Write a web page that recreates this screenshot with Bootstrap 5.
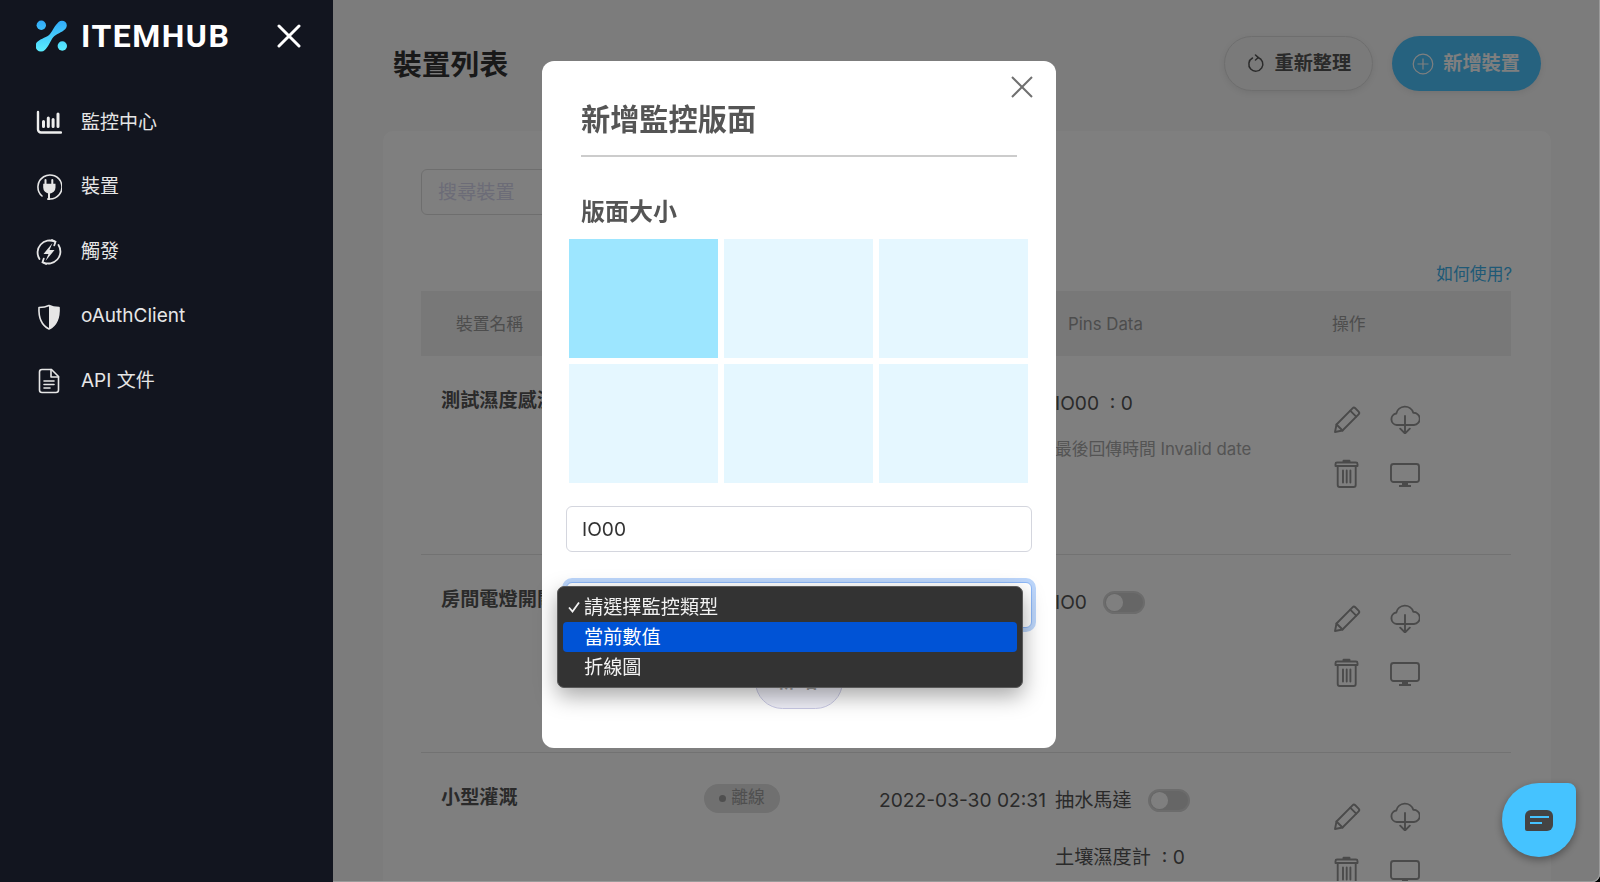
<!DOCTYPE html>
<html lang="zh-Hant">
<head>
    <meta charset="UTF-8">
    <meta name="viewport" content="width=device-width, initial-scale=1.0">
    <title>ITEMHUB</title>
    <link href="https://cdn.jsdelivr.net/npm/bootstrap@5.3.0/dist/css/bootstrap.min.css" rel="stylesheet">
    <style>
        html, body {
            height: 100%;
            overflow: hidden;
        }

        body {
            font-family: Inter, "Noto Sans CJK TC", sans-serif;
            font-size: 19.2px;
            color: #555;
            background-color: #000;
        }

        .app-shell {
            height: 882px;
        }

        /* sidebar stays above the backdrop */
        .side-bar {
            width: 333px;
            flex: none;
            background-color: #12151f;
            color: #e6e6e6;
            position: relative;
            z-index: 1060;
        }

        .side-top {
            height: 72px;
            padding: 0 36px;
        }

        .brand-name {
            font-family: Roboto, Inter, sans-serif;
            font-size: 32px;
            font-weight: 700;
            letter-spacing: 1.5px;
            color: #fff;
            line-height: 1;
            margin-left: 13px;
        }

        .side-close {
            margin-left: auto;
            margin-right: -4px;
        }

        .side-menu {
            padding-top: 18.5px;
        }

        .side-menu a {
            height: 64.6px;
            padding-left: 36px;
            gap: 19px;
            font-size: 19px;
            color: #e6e6e6;
            text-decoration: none;
        }

        .side-menu svg {
            width: 26px;
            height: 26px;
            flex: none;
        }

        .main-area {
            flex: 1;
            min-width: 0;
            background-color: #f8f8f8;
            border-bottom-right-radius: 8px;
            padding: 36px 49px 0 50px;
            overflow: hidden;
        }

        .page-head {
            padding: 0 10px;
        }

        .page-title {
            font-size: 28.8px;
            font-weight: 700;
            color: #333;
            margin: 4px 0 0;
        }

        .head-btn {
            height: 55px;
            padding: 0 21px;
            border-radius: 28px;
            font-size: 19.2px;
            font-weight: 700;
            gap: 9px;
            box-shadow: 0 2px 6px rgba(0, 0, 0, .08);
        }

        .btn-refresh {
            background-color: #f4f4f4;
            border: 1px solid #ddd;
            color: #555;
        }

        .btn-add {
            background-color: #4cc4ff;
            border: 0;
            color: #fff;
            margin-left: 19px;
            padding-left: 20px;
        }

        .list-panel {
            margin-top: 40px;
            background-color: #fff;
            border: 0;
            border-radius: 10px;
            padding: 38px 39px 0 38px;
        }

        .search-box {
            width: 300px;
            height: 46px;
            font-size: 19.2px;
            border-color: #ddd;
            padding-left: 16px;
        }

        .search-box::placeholder {
            color: #d8d8ef;
        }

        .howto-row {
            margin-top: 47px;
            height: 29px;
            font-size: 16.8px;
        }

        .howto-row a {
            color: #3fb2ec;
            text-decoration: none;
        }

        .device-table {
            table-layout: fixed;
            width: 1090px;
            margin: 0;
        }

        .device-table th {
            height: 65px;
            background-color: #f0f0f0;
            font-size: 16.8px;
            font-weight: 400;
            color: #9a9a9a;
            padding: 2px 0 0 35px;
            vertical-align: middle;
            border: 0;
        }

        .device-table td {
            height: 198px;
            vertical-align: top;
            padding: 0;
            font-size: 19.2px;
            color: #555;
            border-bottom: 1px solid #e4e4e4;
            background: transparent;
        }

        .device-table th.pins-head {
            padding-left: 21px;
        }

        .device-name {
            padding: 30px 0 0 20px !important;
            font-weight: 700;
            white-space: nowrap;
        }

        .status-cell {
            padding: 28px 0 0 20px !important;
        }

        .date-cell {
            padding: 33px 0 0 10px !important;
            white-space: nowrap;
        }

        .pins-cell {
            padding: 33px 0 0 8px !important;
        }

        .actions-cell {
            padding: 48px 0 0 35px !important;
        }

        .off-badge {
            height: 29px;
            width: 76px;
            background-color: #e0e0e0;
            border-radius: 15px;
            font-size: 16.8px;
            color: #9e9e9e;
            font-weight: 400;
            gap: 5px;
        }

        .off-dot {
            width: 7px;
            height: 7px;
            border-radius: 50%;
            background-color: #9e9e9e;
        }

        .pin-line {
            height: 29px;
            gap: 16px;
            white-space: nowrap;
        }

        .pin-gap {
            margin-top: 28px;
        }

        .pin-time {
            margin-top: 19px;
            font-size: 16.8px;
            color: #a8a8a8;
            white-space: nowrap;
        }

        .pin-switch.form-check-input {
            width: 42px;
            height: 23px;
            margin: 0;
            background-color: #ccc;
            border: 2px solid #d8d8d8;
            background-image: url("data:image/svg+xml,%3csvg xmlns='http://www.w3.org/2000/svg' viewBox='-4 -4 8 8'%3e%3ccircle r='3.6' fill='%23fff'/%3e%3c/svg%3e");
        }

        .action-grid {
            display: grid;
            grid-template-columns: 30px 30px;
            column-gap: 28px;
            row-gap: 25px;
        }

        .action-grid svg {
            width: 30px;
            height: 30px;
            display: block;
            color: #959595;
        }

        .dim-layer {
            position: fixed;
            inset: 0;
            background-color: rgba(0, 0, 0, .5);
            border-right: 1px solid #9a9a9a;
            border-bottom: 1px solid #9a9a9a;
            border-bottom-right-radius: 8px;
            z-index: 1050;
            padding-top: 61px;
        }

        .add-panel {
            width: 514px;
            height: 687px;
            margin-left: -1px;
            padding: 0 24px;
            border: 0;
            border-radius: 12px;
            background-color: #fff;
            color: #555;
        }

        .panel-close {
            position: absolute;
            right: 23px;
            top: 15px;
            width: 22px;
            height: 22px;
            color: #707070;
        }

        .panel-title {
            margin: 41px 15px 0;
            font-size: 29.2px;
            line-height: 35px;
            font-weight: 700;
            color: #555;
        }

        .panel-rule {
            margin: 18px 15px 0;
            border: 0;
            border-top: 2px solid #ccc;
            opacity: 1;
        }

        .size-label {
            margin: 40px 15px 13px;
            font-size: 24px;
            line-height: 29px;
            font-weight: 700;
            color: #555;
        }

        .size-grid {
            display: grid;
            grid-template-columns: repeat(3, 149px);
            grid-auto-rows: 119px;
            gap: 6px;
            margin: 0 3px;
        }

        .size-cell {
            background-color: #e5f7ff;
        }

        .size-cell.is-on {
            background-color: #9de6ff;
        }

        .panel-field {
            height: 46px;
            font-size: 19.2px;
            color: #333;
            border-color: #d4d6de;
            padding-left: 15px;
        }

        .name-field {
            margin-top: 23px;
        }

        .type-select {
            margin-top: 30px;
            border-color: #8db8f8;
            box-shadow: 0 0 0 4px #bcd6fb;
        }

        .submit-btn {
            width: 88px;
            height: 55px;
            margin-top: 26px;
            border-radius: 28px;
            border: 1px solid #c9c9e4;
            background-color: #efeff8;
            color: #a3a3a3;
            font-size: 19.2px;
            font-weight: 700;
            letter-spacing: 4px;
        }

        /* native select popup, open on top of the field */
        .select-popup {
            position: absolute;
            left: 15px;
            top: 525px;
            width: 466px;
            height: 102px;
            padding: 5px;
            background-color: #333;
            border: 1px solid #5a5a5a;
            border-radius: 7px;
            box-shadow: 0 8px 22px rgba(0, 0, 0, .35);
            color: #f2f2f2;
            font-size: 19.2px;
        }

        .popup-item {
            height: 30px;
            line-height: 30px;
            padding-left: 21px;
            border-radius: 4px;
            position: relative;
        }

        .popup-item.is-hover {
            background-color: #0053d6;
            color: #fff;
        }

        .popup-check {
            position: absolute;
            left: 5px;
            top: 9px;
            width: 12px;
            height: 12px;
        }

        .chat-btn {
            position: fixed;
            left: 1502px;
            top: 783px;
            width: 74px;
            height: 74px;
            background-color: #45c3ff;
            border-radius: 50% 8px 50% 50%;
            box-shadow: 0 3px 8px rgba(0, 0, 0, .35);
            z-index: 1070;
        }
    </style>
</head>
<body>
    <svg width="0" height="0" class="position-absolute">
        <symbol id="i-pencil" viewBox="0 0 30 30" fill="none" stroke="currentColor" stroke-width="1.9" stroke-linejoin="round" stroke-linecap="round">
            <path d="M4.5 20.5 20.5 4.3a2 2 0 0 1 2.8 0L26.6 7.6a2 2 0 0 1 0 2.8L10.500 26.500 3 28z"/>
            <path d="M18.2 6.700 24.200 12.700M4.500 20.500l6 6"/>
        </symbol>
        <symbol id="i-cloud" viewBox="0 0 30 30" fill="none" stroke="currentColor" stroke-width="1.9" stroke-linejoin="round" stroke-linecap="round">
            <path d="M15 21H6.700A5.800 5.800 0 0 1 6.300 9.500 8.800 8.800 0 0 1 23.300 8.800 6.100 6.100 0 0 1 24 21H15"/>
            <path d="M15 12V29.500M10.200 24.700 15 29.500l4.800-4.800"/>
        </symbol>
        <symbol id="i-trash" viewBox="0 0 30 30" fill="none" stroke="currentColor" stroke-width="1.9" stroke-linejoin="round" stroke-linecap="round">
            <path d="M5 3.500h19a1.500 1.500 0 0 1 1.500 1.500v2H3.500V5A1.500 1.500 0 0 1 5 3.500zM11.500 3.500V1.800h6v1.700"/>
            <path d="M5.700 7v19a2 2 0 0 0 2 2h14a2 2 0 0 0 2-2V7"/>
            <path d="M11 11.500v12M14.700 11.500v12M18.400 11.500v12"/>
        </symbol>
        <symbol id="i-screen" viewBox="0 0 30 30" fill="none" stroke="currentColor" stroke-width="1.9" stroke-linejoin="round">
            <rect x="1" y="5" width="28" height="18" rx="2.500"/>
            <path d="M12 23.500h6v2.500h-6z" stroke="none" fill="currentColor"/>
            <path d="M9 27h12" stroke-width="2"/>
        </symbol>
    </svg>

    <div class="app-shell d-flex">
        <aside class="side-bar d-flex flex-column">
            <div class="side-top d-flex align-items-center">
                <svg width="32" height="32" viewBox="0 0 32 32" class="flex-shrink-0">
                    <defs>
                        <linearGradient id="logoGrad" gradientUnits="userSpaceOnUse" x1="0" y1="0" x2="0" y2="32">
                            <stop offset="0" stop-color="#2fa8f8"/>
                            <stop offset="1" stop-color="#5cf0ff"/>
                        </linearGradient>
                    </defs>
                    <circle cx="5.300" cy="5.300" r="4.700" fill="url(#logoGrad)"/>
                    <circle cx="26.300" cy="26" r="4.700" fill="url(#logoGrad)"/>
                    <path d="M22.600 2.100A4.800 4.800 0 0 1 29.400 8.900C25.500 12.800 20.500 13.500 17.200 17.300C14.500 20.500 13.500 25.500 8.900 29.900A5.500 5.500 0 0 1 1.100 22.100C5.500 18 11 17.500 14 14C17 10.500 18 6.500 22.600 2.100Z" fill="url(#logoGrad)"/>
                </svg>
                <span class="brand-name">ITEMHUB</span>
                <svg class="side-close" width="24" height="24" viewBox="0 0 24 24" fill="none" stroke="#fff" stroke-width="3" stroke-linecap="round"><path d="M2 2l20 20M22 2 2 22"/></svg>
            </div>
            <nav class="side-menu d-flex flex-column">
                <a href="#" class="d-flex align-items-center">
                    <svg viewBox="0 0 26 26" fill="none" stroke="#eee" stroke-width="2.400" stroke-linecap="round"><path d="M2 2v17.500a3 3 0 0 0 3 3h20"/><path d="M7.500 11.500v5M12.300 8v8.500M17.100 9.500v7M22 4v12.500" stroke-width="3"/></svg>
                    <span>監控中心</span>
                </a>
                <a href="#" class="d-flex align-items-center">
                    <svg viewBox="0 0 26 26" fill="none" stroke="#e6e6e6" stroke-width="1.600" stroke-linecap="round"><path d="M6 22A12 12 0 1 1 13.500 25"/><path d="M9.500 6v4.500M16.300 6v4.500" stroke-width="2"/><path d="M8 10.500h10.700v3a5.350 5.350 0 0 1-10.700 0z" fill="#e6e6e6"/><path d="M13 17v8h-1" stroke-width="2"/></svg>
                    <span>裝置</span>
                </a>
                <a href="#" class="d-flex align-items-center">
                    <svg viewBox="0 0 26 26" fill="none" stroke="#e6e6e6" stroke-width="1.800" stroke-linecap="round"><path d="M3.500 20A12 12 0 0 1 19 2.800M22.500 6A12 12 0 0 1 7 23.200"/><path d="M16 1l3.500 1.800-1.200 3.500M10 25 6.500 23.200l1.200-3.500"/><path d="M16.500 4 7.500 15h5L9.500 22 18.500 11h-5z" fill="#e6e6e6" stroke="none"/></svg>
                    <span>觸發</span>
                </a>
                <a href="#" class="d-flex align-items-center">
                    <svg viewBox="0 0 26 26" fill="none" stroke="#e6e6e6" stroke-width="1.600" stroke-linejoin="round"><path d="M13 1.500c3 1.500 6 2 10 2 .5 9-1 17-10 21.500C4 20.500 2.500 12.500 3 3.500c4 0 7-.5 10-2z"/><path d="M13 1.500c3 1.500 6 2 10 2 .5 9-1 17-10 21.500z" fill="#e6e6e6" stroke="none"/></svg>
                    <span>oAuthClient</span>
                </a>
                <a href="#" class="d-flex align-items-center">
                    <svg viewBox="0 0 26 26" fill="none" stroke="#e6e6e6" stroke-width="1.600" stroke-linejoin="round" stroke-linecap="round"><path d="M6 1.500h9.500L22.500 8.500V22a2.500 2.500 0 0 1-2.500 2.500H6A2.500 2.500 0 0 1 3.500 22V4A2.500 2.500 0 0 1 6 1.500z"/><path d="M15 1.500V9h7.500M8 13h10M8 16.500h10M8 20h6"/></svg>
                    <span>API 文件</span>
                </a>
            </nav>
        </aside>

        <main class="main-area">
            <div class="page-head d-flex align-items-center">
                <h1 class="page-title">裝置列表</h1>
                <button type="button" class="btn head-btn btn-refresh d-flex align-items-center ms-auto">
                    <svg width="20" height="20" viewBox="0 0 20 20" fill="none" stroke="#555" stroke-width="1.500" stroke-linecap="round"><path d="M12 3.500A7 7 0 1 1 6.500 4"/><path d="M9.500 1 12.300 3.600 9.500 6"/></svg>
                    重新整理
                </button>
                <button type="button" class="btn head-btn btn-add d-flex align-items-center">
                    <svg width="22" height="22" viewBox="0 0 22 22" fill="none" stroke="#fff" stroke-width="1.200"><circle cx="11" cy="11" r="9.800"/><path d="M11 5.500v11M5.500 11h11"/></svg>
                    新增裝置
                </button>
            </div>

            <section class="card list-panel">
                <input type="text" class="form-control search-box" placeholder="搜尋裝置">
                <div class="howto-row text-end"><a href="#">如何使用?</a></div>
                <table class="table device-table">
                    <colgroup>
                        <col style="width: 263px">
                        <col style="width: 185px">
                        <col style="width: 178px">
                        <col style="width: 250px">
                        <col style="width: 214px">
                    </colgroup>
                    <thead>
                        <tr>
                            <th>裝置名稱</th>
                            <th>狀態</th>
                            <th>最後上線時間</th>
                            <th class="pins-head">Pins Data</th>
                            <th>操作</th>
                        </tr>
                    </thead>
                    <tbody>
                        <tr>
                            <td class="device-name">測試濕度感測器</td>
                            <td class="status-cell"><span class="off-badge d-inline-flex align-items-center justify-content-center"><i class="off-dot"></i>離線</span></td>
                            <td class="date-cell"></td>
                            <td class="pins-cell">
                                <div class="pin-line d-flex align-items-center">IO00&nbsp;&nbsp;: 0</div>
                                <div class="pin-time">最後回傳時間 Invalid date</div>
                            </td>
                            <td class="actions-cell">
                                <div class="action-grid">
                                    <svg><use href="#i-pencil"/></svg>
                                    <svg><use href="#i-cloud"/></svg>
                                    <svg><use href="#i-trash"/></svg>
                                    <svg><use href="#i-screen"/></svg>
                                </div>
                            </td>
                        </tr>
                        <tr>
                            <td class="device-name">房間電燈開關</td>
                            <td class="status-cell"><span class="off-badge d-inline-flex align-items-center justify-content-center"><i class="off-dot"></i>離線</span></td>
                            <td class="date-cell"></td>
                            <td class="pins-cell">
                                <div class="pin-line d-flex align-items-center form-switch p-0">IO0 <input class="form-check-input pin-switch" type="checkbox" role="switch"></div>
                            </td>
                            <td class="actions-cell">
                                <div class="action-grid">
                                    <svg><use href="#i-pencil"/></svg>
                                    <svg><use href="#i-cloud"/></svg>
                                    <svg><use href="#i-trash"/></svg>
                                    <svg><use href="#i-screen"/></svg>
                                </div>
                            </td>
                        </tr>
                        <tr>
                            <td class="device-name">小型灌溉</td>
                            <td class="status-cell"><span class="off-badge d-inline-flex align-items-center justify-content-center"><i class="off-dot"></i>離線</span></td>
                            <td class="date-cell">2022-03-30 02:31</td>
                            <td class="pins-cell">
                                <div class="pin-line d-flex align-items-center form-switch p-0">抽水馬達 <input class="form-check-input pin-switch" type="checkbox" role="switch"></div>
                                <div class="pin-line pin-gap d-flex align-items-center">土壤濕度計&nbsp;&nbsp;: 0</div>
                            </td>
                            <td class="actions-cell">
                                <div class="action-grid">
                                    <svg><use href="#i-pencil"/></svg>
                                    <svg><use href="#i-cloud"/></svg>
                                    <svg><use href="#i-trash"/></svg>
                                    <svg><use href="#i-screen"/></svg>
                                </div>
                            </td>
                        </tr>
                    </tbody>
                </table>
            </section>
        </main>
    </div>

    <div class="dim-layer d-flex justify-content-center align-items-start">
        <div class="modal-content add-panel">
            <svg class="panel-close" viewBox="0 0 22 22" fill="none" stroke="currentColor" stroke-width="2"><path d="M1 1l20 20M21 1 1 21"/></svg>
            <h2 class="panel-title">新增監控版面</h2>
            <hr class="panel-rule">
            <div class="size-label">版面大小</div>
            <div class="size-grid">
                <div class="size-cell is-on"></div>
                <div class="size-cell"></div>
                <div class="size-cell"></div>
                <div class="size-cell"></div>
                <div class="size-cell"></div>
                <div class="size-cell"></div>
            </div>
            <input type="text" class="form-control panel-field name-field" value="IO00">
            <select class="form-select panel-field type-select">
                <option>請選擇監控類型</option>
            </select>
            <button type="button" class="btn submit-btn mx-auto d-block">新增</button>

            <div class="select-popup">
                <div class="popup-item">
                    <svg class="popup-check" viewBox="0 0 12 12" fill="none" stroke="#f2f2f2" stroke-width="1.800"><path d="M1 6.500 4.500 10.500 11 1.500"/></svg>
                    請選擇監控類型
                </div>
                <div class="popup-item is-hover">當前數值</div>
                <div class="popup-item">折線圖</div>
            </div>
        </div>
    </div>

    <div class="chat-btn d-flex align-items-center justify-content-center">
        <svg width="28" height="21" viewBox="0 0 28 21">
            <path d="M6 0h16a6 6 0 0 1 6 6v9a6 6 0 0 1-6 6H2a2 2 0 0 1-2-2V6a6 6 0 0 1 6-6z" fill="#444"/>
            <path d="M5 7h19M5 13h12" stroke="#45c3ff" stroke-width="2"/>
        </svg>
    </div>

    <script src="https://cdn.jsdelivr.net/npm/bootstrap@5.3.0/dist/js/bootstrap.bundle.min.js"></script>
</body>
</html>
